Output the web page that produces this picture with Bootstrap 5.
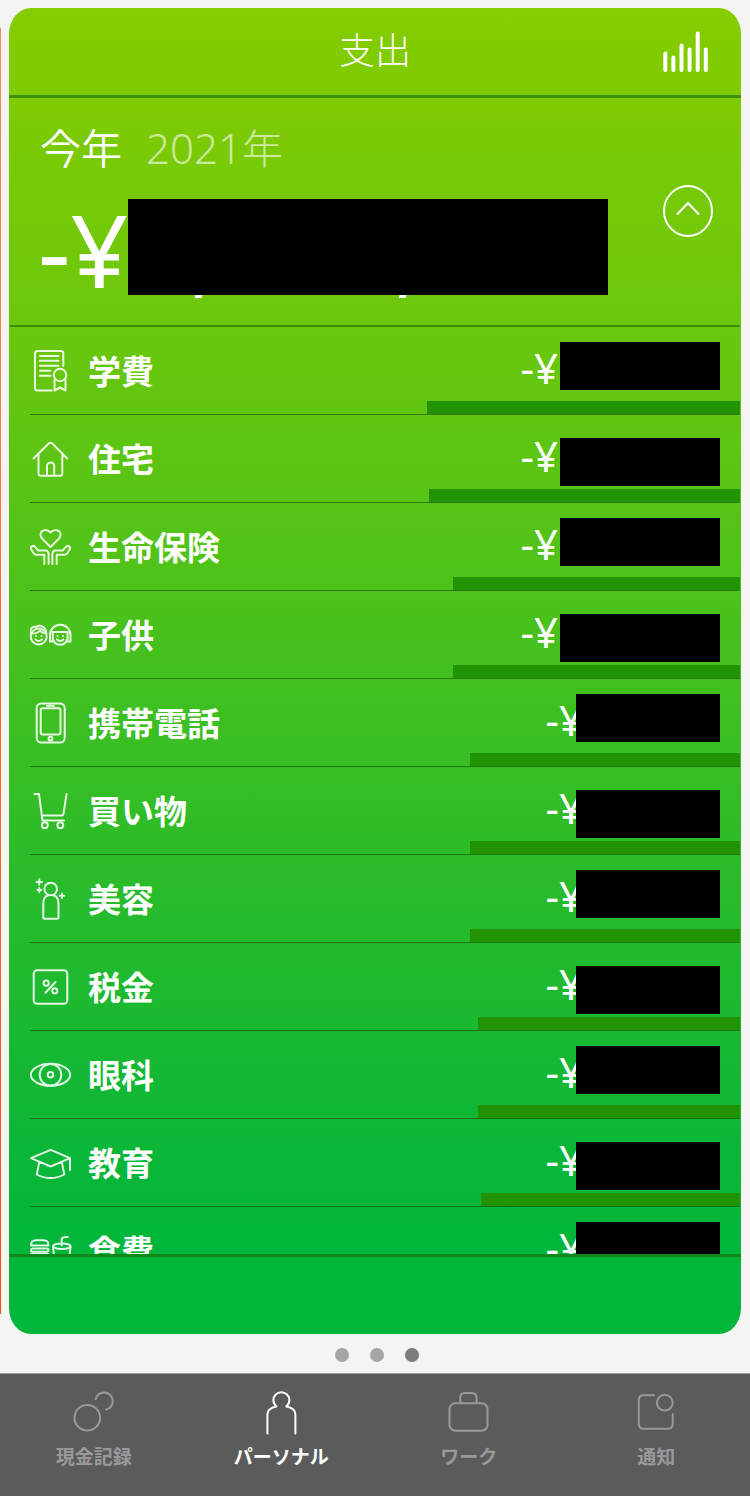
<!DOCTYPE html>
<html lang="ja">
<head>
<meta charset="utf-8">
<meta name="viewport" content="width=device-width, initial-scale=1">
<title>支出</title>
<link href="https://cdn.jsdelivr.net/npm/bootstrap@5.3.0/dist/css/bootstrap.min.css" rel="stylesheet">
<style>
  body { height: 100vh; background: #f4f4f2; font-family: "Noto Sans CJK JP", sans-serif; }
  svg { display: block; fill: none; stroke: currentColor; stroke-width: 2; stroke-linecap: round; stroke-linejoin: round; }

  /* slides */
  .slides { gap: 8px; padding: 8px 9px 0 0; min-height: 0; }
  .peek { width: 1px; margin: 20px 0; background: linear-gradient(#ff8a4a, #fb6a30 50%, #f04e14); }
  .sheet { min-width: 0; border-radius: 22px / 26px; overflow: hidden; color: #fff;
    background: linear-gradient(#86cc00, #6bc70d 24%, #4dc21a 44%, #2ebc29 63%, #10b735 83%, #02b53b 92%); }
  .sheet-head { height: 90px; border-bottom: 3px solid #3f9105; padding: 0 32px; }
  .sheet-head h1 { font-size: 36px; font-weight: 300; line-height: 40px; padding-bottom: 8px; }
  .side-slot { width: 46px; }
  .bars-icon { stroke-width: 4; }
  .icon-btn { background: none; border: 0; padding: 0; color: inherit; }
  .summary { height: 229px; margin: 0 1px; border-bottom: 2px solid #3c9008; padding: 24px 27px 0 30px; }
  .period { font-size: 41px; line-height: 48px; gap: 24px; font-weight: 300; }
  .period b { font-weight: 350; }
  .period span { opacity: .6; }
  .period i { font: 300 42px/48px "Noto Sans", sans-serif; }
  .total { font: 400 101px/96px "Noto Sans", sans-serif; margin: 27px 0 0 -2px; }
  .total-text { height: 96px; padding-top: 2px; }
  .fold-btn { margin-top: 63px; }

  /* hidden amounts */
  .redact { background: #000; flex: none; }
  .total .redact { position: relative; width: 480px; height: 96px; }
  .total .redact::before, .total .redact::after { content: ""; position: absolute; top: 96px; left: 67px; width: 7px; height: 3px; background: #fff; transform: skewX(-15deg); }
  .total .redact::after { left: 271px; }

  .rows { min-height: 0; overflow: hidden; margin: 0 1px 0 21px; }
  .entry { position: relative; height: 88px; border-bottom: 1px solid rgba(20,70,0,.6); padding-right: 20px; }
  .entry a { gap: 16px; }
  .entry svg { opacity: .88; }
  .entry-name { font-size: 33px; font-weight: 700; line-height: 40px; padding-bottom: 2px; }
  .amount { font: 400 42px/48px "Noto Sans", sans-serif; }
  .amount-text { margin-top: 17px; }
  .amount .redact { width: 144px; height: 48px; margin-top: 15px; margin-left: -7px; }
  .amount .redact.wide { width: 160px; margin-left: 2px; }
  .entry:nth-child(even) .redact { margin-top: 23px; }
  .share { position: absolute; right: 0; bottom: 0; height: 13px; background: #219305; }
  .sheet-foot { height: 80px; border-top: 3px solid #12871a; flex: none; }

  /* pager and tab bar */
  .pager { height: 39px; gap: 21px; padding: 2px 0 0 4px; }
  .pager button { width: 14px; height: 14px; border: 0; padding: 0; border-radius: 50%; background: #a6a5a4; }
  .pager button[aria-current] { background: #7c7a7b; }
  .tabs { height: 123px; border-top: 1px solid #9b9f9b; background: #5b5b5b; }
  .tabs a { color: #999; font-size: 19px; font-weight: 500; line-height: 24px; padding-top: 17px; gap: 9px; text-decoration: none; -webkit-text-stroke: 0; }
  .tabs a { font-weight: 700; }
  .tabs a.active { color: #fff; }
</style>
</head>
<body class="d-flex flex-column overflow-hidden">

<main class="slides d-flex flex-fill">
  <div class="peek"></div>
  <section class="sheet d-flex flex-column flex-fill">
    <header class="sheet-head d-flex justify-content-between align-items-center flex-shrink-0">
      <span class="side-slot"></span>
      <h1 class="m-0">支出</h1>
      <button class="icon-btn" aria-label="グラフ">
        <svg class="bars-icon" width="46" height="42" viewBox="0 0 46 42"><path d="M2.300 22.500V39M10.400 26.500V39M18.500 14.500V39M26.600 18.500V39M34.700 2.500V39M42.800 18.500V39"/></svg>
      </button>
    </header>

    <div class="summary d-flex justify-content-between align-items-start flex-shrink-0">
      <div>
        <div class="period d-flex"><b>今年</b><span><i>2021</i>年</span></div>
        <div class="total d-flex"><div class="total-text">-¥</div><div class="redact"></div></div>
      </div>
      <button class="icon-btn fold-btn" aria-label="閉じる">
        <svg width="50" height="52" viewBox="0 0 50 52"><ellipse cx="25" cy="26" rx="24" ry="25"/><path d="M14.500 29 25 18l10.500 11"/></svg>
      </button>
    </div>

    <ul class="rows list-unstyled flex-fill" id="rows"></ul>
    <div class="sheet-foot"></div>
  </section>
</main>

<div class="pager d-flex justify-content-center align-items-center flex-shrink-0">
  <button aria-label="1"></button><button aria-label="2"></button><button aria-label="3" aria-current="true"></button>
</div>

<nav class="tabs d-flex flex-shrink-0">
  <a href="#" class="col-3 d-flex flex-column align-items-center">
    <svg width="42" height="44" viewBox="0 0 42 44"><circle cx="14.300" cy="26.700" r="12.800"/><path d="M22.600 8.300A8.700 8.700 0 1 1 33 18.600"/></svg>現金記録</a>
  <a href="#" class="active col-3 d-flex flex-column align-items-center" aria-current="page">
    <svg width="42" height="44" viewBox="0 0 42 44"><path d="M7.400 42.500V23.500C7.400 18.500 11 16.500 16.500 15.500 14.500 13.700 13.400 11.500 13.400 9.200a8 8 0 0 1 16 0C29.400 11.500 28.300 13.700 26.300 15.500 31.800 16.500 35.400 18.500 35.400 23.500V42.500"/></svg>パーソナル</a>
  <a href="#" class="col-3 d-flex flex-column align-items-center">
    <svg width="42" height="44" viewBox="0 0 42 44"><rect x="1.500" y="12.200" width="38" height="27.500" rx="6"/><path d="M12.200 12V7q0-5 5-5h6.400q5 0 5 5v5"/></svg>ワーク</a>
  <a href="#" class="col-3 d-flex flex-column align-items-center">
    <svg width="42" height="44" viewBox="0 0 42 44"><path d="M19.200 4.200H8.500q-4.700 0-4.700 4.700V33q0 4.700 4.700 4.700H33q4.700 0 4.700-4.700V23"/><circle cx="29.800" cy="11.700" r="7.900"/></svg>通知</a>
</nav>

<script>
  const icons = {
    diploma: '<path d="M21.700 40.500H7.500q-2.500 0-2.500-2.500V3.500Q5 1 7.500 1H31q2.300 0 2.300 2.300V16M10 6h18.500M10 10.800h18.500M10 15.800h18.500M10 20.800h10.500M10 25.800h10.500M24.500 30V40.500L30 37.500l5.500 3V30"/><circle cx="30" cy="25" r="6.200"/>',
    house: '<path d="M3.500 20.500 18.700 5.500q1.800-1.600 3.600 0L37.200 20.500M8.500 16.500V35.500q0 2.300 2.300 2.300H30q2.300 0 2.300-2.300V16.500M17 37.500V28a3.600 3.600 0 0 1 7.200 0V37.500"/>',
    care: '<path d="M20.500 21 12.500 13C6.500 6 15 1 20.500 6.500 26 1 34.500 6 28.500 13ZM14.300 38V28.700H6.500Q4.500 28.700 3.500 27L1.300 23.500C-.2 21 3 18.700 5 20.800L8.300 24.500H15.500Q18.600 24.500 18.600 28V38M26.700 38V28.700H34.500Q36.500 28.700 37.500 27L39.700 23.500C41.200 21 38 18.700 36 20.800L32.700 24.500H25.500Q22.400 24.500 22.400 28V38"/>',
    kids: '<circle cx="8.700" cy="22.500" r="8"/><path d="M1 21C-.5 14.500 2.500 12 6 13 9.500 10.500 16.500 12 16.300 20M1.500 19.500C5 19.500 8.500 18.500 10 16.500 11 18.500 13 19 15.700 19M6 22v.1M11.500 22v.1M5.500 25.500q3.200 3 6.400 0M20 27.500V21a10.200 10.200 0 0 1 20.500 0V27.500H37.500V18H22.800V27.500ZM22.800 25.500q2.500 5.300 7.300 5.300t7.400-5.300M27.500 22v.1M33 22v.1M27 25.500q3.200 3 6.400 0"/>',
    phone: '<rect x="6.700" y="1.500" width="28" height="39" rx="4.500"/><rect x="10.700" y="6.300" width="19.800" height="26.200" rx="2"/><path d="M17 3.800h7"/><circle cx="20.500" cy="36.700" r="1.900"/>',
    cart: '<path d="M4.500 4H9l3.500 26.500H34M12 25.500h19.500q1.800 0 2-1.800L36.500 4"/><circle cx="14.800" cy="35.200" r="2.900"/><circle cx="30.300" cy="35.200" r="2.900"/>',
    beauty: '<circle cx="20.700" cy="11" r="6.300"/><path d="M13.300 39.500V26Q13.300 18.500 18 17.500M23.500 17.500Q28.500 18.500 28.500 26V39.500q0 1.300-1.300 1.300H14.600q-1.300 0-1.300-1.300M9.300 1.200v5.600M6.500 4h5.600M9.300 10v4M7.300 12h4M32 15.500v4.400M29.800 17.700h4.400"/>',
    tax: '<rect x="3.700" y="4.200" width="33.600" height="33.600" rx="3.500"/><path d="M25.500 16 15.500 26.800"/><circle cx="16.200" cy="17.200" r="2.600"/><circle cx="24.800" cy="24.800" r="2.600"/>',
    eye: '<ellipse cx="20.500" cy="20.800" rx="19.700" ry="11"/><circle cx="20.500" cy="20.800" r="10.800"/><circle cx="20.500" cy="20.800" r="2.800"/>',
    cap: '<path d="M40 28V16.200L20.700 7.800 1 16.200 20.700 24.500 40 16.200M9.200 20.500 6.800 32.500Q13 36 20.500 36T34.300 32.500L31.900 20.500"/>',
    food: '<path d="M1 15.500Q1 10.300 6 10.300h7.500q5 0 5 5.200ZM1 24h17.500q0 4-4 4H5q-4 0-4-4ZM2.500 18.500h14.500q1.500 0 1.500 1.600t-1.500 1.700h-14.500Q1 21.800 1 20.200t1.500-1.700M23 16.300 25 37.500h13.500L40.500 16.300M31.700 15.500V10q0-2.300 2.300-2.700L37.700 6.900"/><ellipse cx="31.800" cy="16.300" rx="8.700" ry="2.800"/>'
  };
  const entries = [
    ['学費', 'diploma', 44.1, true], ['住宅', 'house', 43.8, true], ['生命保険', 'care', 40.4, true],
    ['子供', 'kids', 40.4, true], ['携帯電話', 'phone', 38], ['買い物', 'cart', 38], ['美容', 'beauty', 38],
    ['税金', 'tax', 36.9], ['眼科', 'eye', 36.9], ['教育', 'cap', 36.5], ['食費', 'food', 36]
  ];
  document.getElementById('rows').innerHTML = entries.map(([name, icon, share, wide]) => `
    <li class="entry">
      <div class="share" style="width:${share}%"></div>
      <a href="#" class="d-flex align-items-center h-100 text-reset text-decoration-none position-relative">
        <svg width="42" height="42" viewBox="0 0 42 42" class="flex-shrink-0">${icons[icon]}</svg>
        <span class="entry-name flex-fill">${name}</span>
        <span class="amount d-flex align-self-start"><span class="amount-text">-¥</span><span class="redact${wide ? ' wide' : ''}"></span></span>
      </a>
    </li>`).join('');
</script>
<script src="https://cdn.jsdelivr.net/npm/bootstrap@5.3.0/dist/js/bootstrap.bundle.min.js"></script>
</body>
</html>
